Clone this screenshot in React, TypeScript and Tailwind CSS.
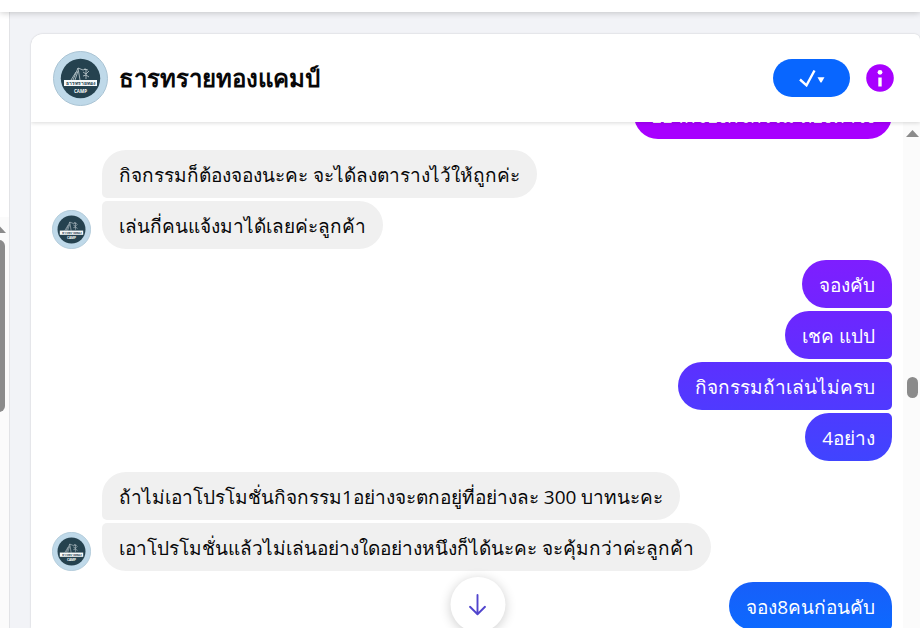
import type { ReactNode } from "react";

function CampLogo({ className }: { className: string }) {
  return (
    <svg viewBox="0 0 55 55" className={className} role="img" aria-label="ธารทรายทองแคมป์">
      <circle cx="27.5" cy="27.5" r="27" fill="#bfd9e9" stroke="#a9c3d3" />
      <circle cx="27.5" cy="27.5" r="19.7" fill="#25424f" />
      <g fill="none" stroke="#c4d0d4" strokeWidth="0.8">
        <path d="M20 29 25 17 27 29M22 29 25 20M18 29l5-8M25 17l5 2 3-1" />
        <path d="M33 28V18M30 21l3 2 3-3M30 25l3-1 3 2M31 18l4 1" />
      </g>
      <rect x="11" y="29" width="33" height="6" fill="#f7fafa" />
      <text x="27.5" y="34" textAnchor="middle" fontSize="5" fontWeight="700" fill="#25424f">ธารทรายทอง</text>
      <text x="27.5" y="41.5" textAnchor="middle" fontSize="4.5" fontWeight="700" fill="#ffffff">CAMP</text>
    </svg>
  );
}

function Received({ messages }: { messages: string[] }) {
  return (
    <div className="flex items-end gap-[11px]">
      <CampLogo className="size-[39px] shrink-0" />
      <div className="flex flex-col items-start gap-[3px]">
        {messages.map((m, i) => (
          <p
            key={m}
            className={`flex h-12 items-center whitespace-nowrap bg-[#f0f0f0] px-[17px] pt-[2px] text-[#080809] ${
              i === 0 ? "rounded-[24px] rounded-bl-[5px]" : "rounded-[24px] rounded-tl-[5px]"
            }`}
          >
            {m}
          </p>
        ))}
      </div>
    </div>
  );
}

function Sent({ className, children }: { className: string; children: ReactNode }) {
  return (
    <p className={`flex h-12 shrink-0 items-center whitespace-nowrap rounded-[24px] px-[17px] pt-[2px] text-white ${className}`}>
      {children}
    </p>
  );
}

function ScrollArrow() {
  return (
    <svg viewBox="0 0 13 7" className="h-[7px] w-[13px] shrink-0" aria-hidden="true">
      <path d="M0 7 6.500 0 13 7Z" fill="#8b8b8b" />
    </svg>
  );
}

export default function App() {
  return (
    <div className="flex h-screen flex-col overflow-hidden bg-[#f2f3f7] font-['Open_Sans',sans-serif] text-[19px] leading-6">
      <div className="relative z-10 h-3 shrink-0 bg-white shadow-[0_1px_6px_rgba(0,0,0,0.2)]" />
      <div className="flex min-h-0 flex-1">
        <aside className="flex w-[10px] shrink-0 flex-col overflow-hidden border-r border-[#e2e3e6] bg-white pt-[205px]">
          <div className="flex flex-1 flex-col items-end bg-[#fbfbfb] pt-[9px] pr-[3px]">
            <ScrollArrow />
            <div className="mt-[7px] mr-px h-[172px] w-3 rounded-full bg-[#8b8b8b]" />
          </div>
        </aside>
        <main className="mt-[22px] ml-[21px] flex min-w-0 flex-1 flex-col overflow-hidden rounded-tl-xl rounded-tr-md bg-white shadow-[0_0_2px_rgba(0,0,0,0.2)]">
          <header className="relative z-10 flex h-[88px] shrink-0 items-center bg-white pr-[26px] pl-[22px] shadow-[0_1px_4px_rgba(0,0,0,0.15)]">
            <CampLogo className="size-[55px] shrink-0" />
            <h1 className="ml-[11px] flex-1 text-[24px] leading-8 font-bold text-[#080809]">ธารทรายทองแคมป์</h1>
            <button type="button" aria-label="ทำเครื่องหมายว่าเสร็จ" className="flex h-[38px] w-[77px] items-center justify-center rounded-full bg-[#0866ff]">
              <svg viewBox="0 0 26 18" className="h-[18px] w-[26px]" aria-hidden="true">
                <path d="m1 10.500 6.500 5.800L15.500 1.500" fill="none" stroke="#fff" strokeWidth="2.400" />
                <path d="M18.500 8.300h7L22.500 13.500h-1Z" fill="#fff" />
              </svg>
            </button>
            <button type="button" aria-label="ข้อมูลการสนทนา" className="ml-4 size-7">
              <svg viewBox="0 0 28 28" className="size-7" aria-hidden="true">
                <circle cx="14" cy="14" r="13.800" fill="#a800ff" />
                <circle cx="14" cy="8.300" r="2.400" fill="#fff" />
                <path d="M12.300 13.500h3.400v9h-3.400z" fill="#fff" />
              </svg>
            </button>
          </header>
          <div className="relative flex min-h-0 flex-1 overflow-hidden">
            <section className="-mt-[31px] flex min-w-0 flex-1 flex-col gap-[11px] pr-[11px] pl-[21px]">
              <div className="flex flex-col items-end">
                <Sent className="bg-[#a800ff]">อยากจองกิจกรรม ต้องทำไง</Sent>
              </div>
              <Received messages={["กิจกรรมก็ต้องจองนะคะ จะได้ลงตารางไว้ให้ถูกค่ะ", "เล่นกี่คนแจ้งมาได้เลยค่ะลูกค้า"]} />
              <div className="flex flex-col items-end gap-[3px]">
                <Sent className="rounded-br-[5px] bg-linear-to-b from-[#7e1eff] to-[#7124ff]">จองคับ</Sent>
                <Sent className="rounded-r-[5px] bg-linear-to-b from-[#6d26ff] to-[#602eff]">เชค แปป</Sent>
                <Sent className="rounded-r-[5px] bg-linear-to-b from-[#5c30ff] to-[#4f3aff]">กิจกรรมถ้าเล่นไม่ครบ</Sent>
                <Sent className="rounded-tr-[5px] bg-linear-to-b from-[#4d3bff] to-[#4044ff]">4อย่าง</Sent>
              </div>
              <Received messages={["ถ้าไม่เอาโปรโมชั่นกิจกรรม1อย่างจะตกอยู่ที่อย่างละ 300 บาทนะคะ", "เอาโปรโมชั่นแล้วไม่เล่นอย่างใดอย่างหนึงก็ได้นะคะ จะคุ้มกว่าค่ะลูกค้า"]} />
              <div className="flex flex-col items-end">
                <Sent className="rounded-br-[5px] bg-linear-to-b from-[#175ff9] to-[#0b69ff]">จอง8คนก่อนคับ</Sent>
              </div>
            </section>
            <div className="flex w-[17px] shrink-0 flex-col items-center bg-[#fbfbfb] pt-2 pl-px">
              <ScrollArrow />
              <div className="mt-60 h-[21px] w-[11px] rounded-full bg-[#8b8b8b]" />
            </div>
            <button type="button" aria-label="เลื่อนไปข้อความล่าสุด" className="absolute -bottom-1 left-1/2 ml-[2px] flex size-[55px] -translate-x-1/2 items-center justify-center rounded-full bg-white shadow-[0_2px_12px_rgba(0,0,0,0.2)]">
              <svg viewBox="0 0 18 22" className="h-[22px] w-[18px]" fill="none" stroke="#5145cd" strokeWidth="1.900" strokeLinecap="round" strokeLinejoin="round" aria-hidden="true">
                <path d="M9 1v19M1.500 12.800 9 20.200l7.500-7.400" />
              </svg>
            </button>
          </div>
        </main>
      </div>
    </div>
  );
}
